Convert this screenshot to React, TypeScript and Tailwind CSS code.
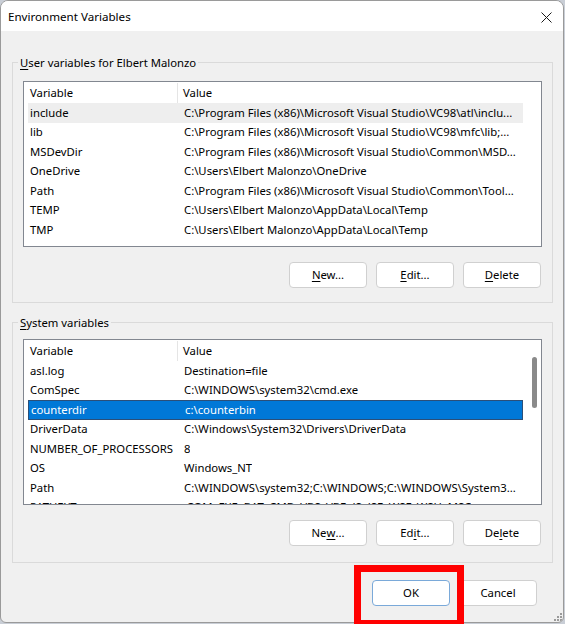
import React from 'react'

type Row = { name: string; value: string }

const userVars: Row[] = [
  { name: 'include', value: 'C:\\Program Files (x86)\\Microsoft Visual Studio\\VC98\\atl\\inclu...' },
  { name: 'lib', value: 'C:\\Program Files (x86)\\Microsoft Visual Studio\\VC98\\mfc\\lib;...' },
  { name: 'MSDevDir', value: 'C:\\Program Files (x86)\\Microsoft Visual Studio\\Common\\MSD...' },
  { name: 'OneDrive', value: 'C:\\Users\\Elbert Malonzo\\OneDrive' },
  { name: 'Path', value: 'C:\\Program Files (x86)\\Microsoft Visual Studio\\Common\\Tool...' },
  { name: 'TEMP', value: 'C:\\Users\\Elbert Malonzo\\AppData\\Local\\Temp' },
  { name: 'TMP', value: 'C:\\Users\\Elbert Malonzo\\AppData\\Local\\Temp' },
]

const systemVars: Row[] = [
  { name: 'asl.log', value: 'Destination=file' },
  { name: 'ComSpec', value: 'C:\\WINDOWS\\system32\\cmd.exe' },
  { name: 'counterdir', value: 'c:\\counterbin' },
  { name: 'DriverData', value: 'C:\\Windows\\System32\\Drivers\\DriverData' },
  { name: 'NUMBER_OF_PROCESSORS', value: '8' },
  { name: 'OS', value: 'Windows_NT' },
  { name: 'Path', value: 'C:\\WINDOWS\\system32;C:\\WINDOWS;C:\\WINDOWS\\System3...' },
  { name: 'PATHEXT', value: '.COM;.EXE;.BAT;.CMD;.VBS;.VBE;.JS;.JSE;.WSF;.WSH;.MSC' },
]

function Btn({ pre, key1, post, primary }: { pre: string; key1: string; post: string; primary?: boolean }) {
  return (
    <button
      className={
        'w-[78px] h-[26px] rounded-[4px] bg-white text-black flex items-center justify-center border ' +
        (primary ? 'border-[#7aa9d9]' : 'border-[#d0d0d0]')
      }
    >
      {pre}
      <span className="underline underline-offset-2">{key1}</span>
      {post}
    </button>
  )
}

function VarList({ rows, hover, selected, thumb }: { rows: Row[]; hover?: number; selected?: number; thumb?: boolean }) {
  return (
    <div className="h-[166px] border border-[#828790] bg-white flex overflow-hidden">
      <div className="flex-1 flex flex-col overflow-hidden">
        <div className="h-[21px] shrink-0 flex items-center pt-[1px]">
          <div className="w-[154px] h-full pl-[6px] flex items-center border-r border-[#e5e5e5]">Variable</div>
          <div className="pl-[5px]">Value</div>
        </div>
        <div className="pl-[4px] flex flex-col">
          {rows.map((r, i) => (
            <div
              key={r.name}
              className={
                'h-[19.5px] shrink-0 flex items-center whitespace-nowrap pt-[1px] ' +
                (i === selected
                  ? 'bg-[#0078d7] text-white border border-[#2b4f78]'
                  : i === hover
                    ? 'bg-[#eeeeee]'
                    : '')
              }
            >
              <div className="w-[150px] pl-[2px] shrink-0 overflow-hidden">{r.name}</div>
              <div className="pl-[6px] overflow-hidden text-ellipsis">{r.value}</div>
            </div>
          ))}
        </div>
      </div>
      <div className="w-[18px] shrink-0 flex justify-center">
        {thumb && <div className="w-[5px] h-[51px] mt-[17px] ml-[4px] rounded-full bg-[#8a8a8a]" />}
      </div>
    </div>
  )
}

function Group({ label, children, className }: { label: React.ReactNode; children: React.ReactNode; className: string }) {
  return (
    <div className={'relative ml-[11px] mr-[10px] border border-[#dadada] ' + className}>
      <span className="absolute -top-[8px] left-[5px] px-[2px] leading-[16px] bg-[#f0f0f0]">{label}</span>
      {children}
    </div>
  )
}

export default function App() {
  return (
    <div className="relative w-[565px] h-[624px] bg-[#c9ced6] overflow-hidden font-['Segoe_UI','Noto_Sans',sans-serif] text-[11.3px] text-black">
      <div className="relative w-[564px] h-[623px] border border-[#9a9a9a] rounded-t-[8px] rounded-b-[6px] bg-[#f0f0f0] overflow-hidden flex flex-col">
        <div className="h-[30px] shrink-0 bg-white flex items-center justify-between pl-[7px] pr-[11px] pt-[1px]">
          <span className="text-[11.6px]">Environment Variables</span>
          <svg width="11" height="11" viewBox="0 0 11 11" className="mt-[1px]">
            <path d="M0.5 0.5 L10.5 10.5 M10.5 0.5 L0.5 10.5" stroke="#1a1a1a" strokeWidth="1" />
          </svg>
        </div>

        <Group
          className="mt-[31px] pt-[18px] pl-[10px] pr-[10px] pb-[14px]"
          label={
            <>
              <span className="underline underline-offset-2">U</span>ser variables for Elbert Malonzo
            </>
          }
        >
          <VarList rows={userVars} hover={0} />
          <div className="mt-[15px] flex justify-end gap-[9px] pr-[1px]">
            <Btn pre="" key1="N" post="ew..." />
            <Btn pre="" key1="E" post="dit..." />
            <Btn pre="" key1="D" post="elete" />
          </div>
        </Group>

        <Group
          className="mt-[19px] pt-[16px] pl-[10px] pr-[10px] pb-[16px]"
          label={
            <>
              <span className="underline underline-offset-2">S</span>ystem variables
            </>
          }
        >
          <VarList rows={systemVars} selected={2} thumb />
          <div className="mt-[15px] flex justify-end gap-[9px] pr-[1px]">
            <Btn pre="Ne" key1="w" post="..." />
            <Btn pre="Ed" key1="i" post="t..." />
            <Btn pre="De" key1="l" post="ete" />
          </div>
        </Group>

        <div className="mt-[17px] flex justify-end gap-[9px] pr-[26px]">
          <Btn pre="" key1="" post="OK" primary />
          <Btn pre="" key1="" post="Cancel" />
        </div>

        <svg width="8" height="8" viewBox="0 0 8 8" className="absolute right-[1px] bottom-[1px]">
          {[[6, 0], [6, 3], [3, 3], [6, 6], [3, 6], [0, 6]].map(([x, y]) => (
            <rect key={`${x}-${y}`} x={x} y={y} width="2" height="2" fill="#9a9a9a" />
          ))}
        </svg>
      </div>
      <div className="absolute left-[354px] top-[565px] w-[110px] h-[62px] border-[7px] border-[#ff0000]" />
    </div>
  )
}
